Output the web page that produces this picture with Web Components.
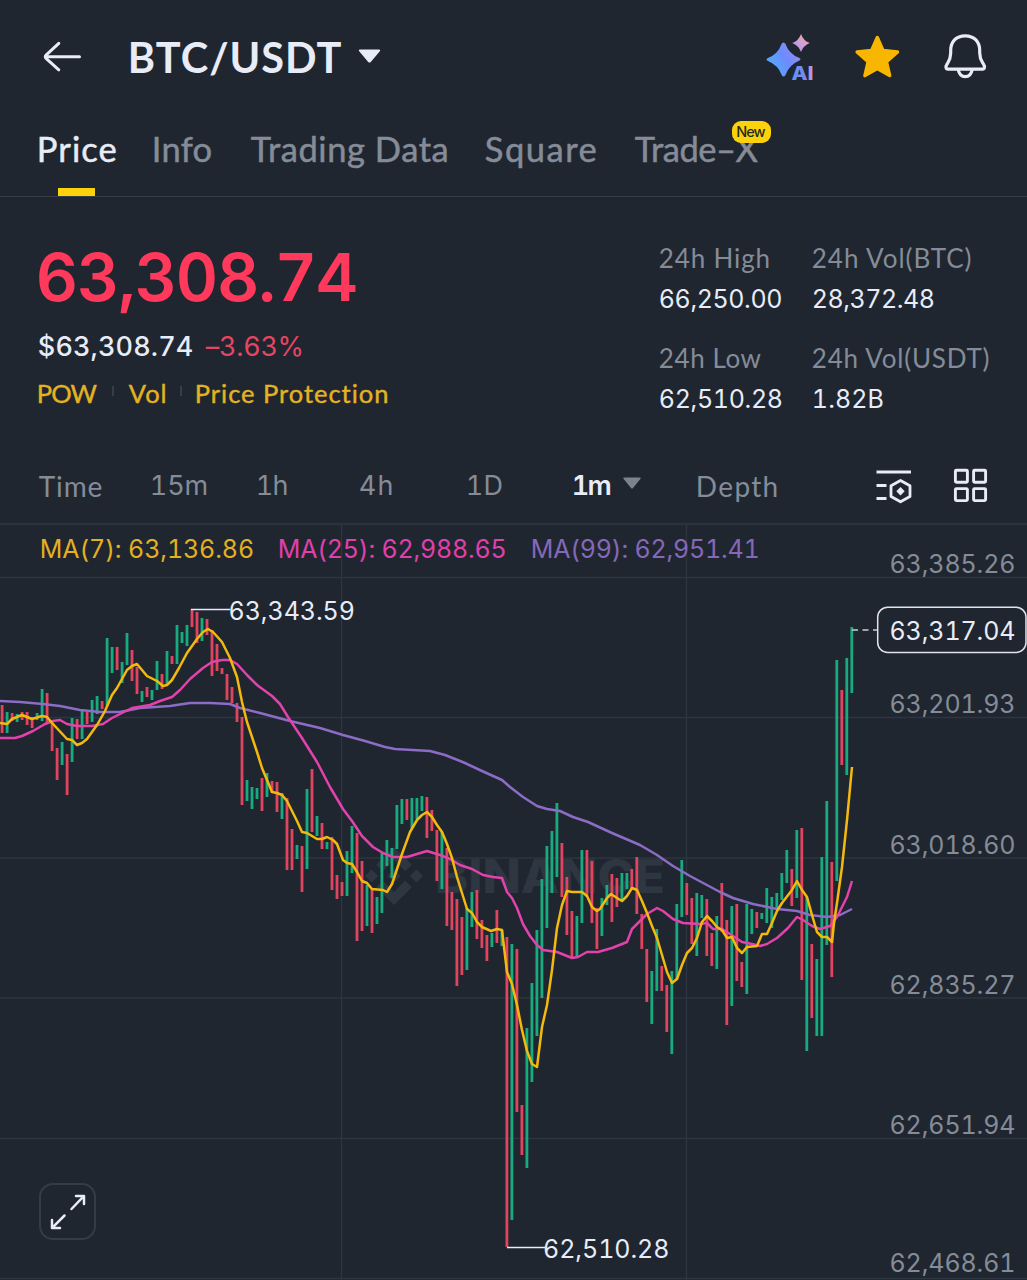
<!DOCTYPE html>
<html lang="en">
<head>
<meta charset="utf-8">
<title>BTC/USDT</title>
<style>
html { background: #1f2630; }
body {
  margin: 0;
  width: 1027px;
  height: 1280px;
  overflow: hidden;
  background: #1f2630;
  color: #e8ecf7;
  font-family: Lato, "Open Sans", sans-serif;
  --muted: #858c98;
  --num: Inter, Roboto, sans-serif;
}
</style>
</head>
<body>
<trade-app></trade-app>

<script>
// text that is spaced out to fill exactly "w" pixels of ink
window.customElements.define('fit-text',
  class extends HTMLElement {
    constructor(){
      super();
      this.attachShadow({mode:'open'});
      this.shadowRoot.innerHTML = `
<style>
:host { display: block; flex: none; white-space: nowrap; }
span { display: inline-block; font-variant-numeric: tabular-nums; }
:host([num]) span { font-kerning: none; }
</style>
<span><slot></slot></span>`;
    }

    connectedCallback(){
      const w = Number(this.getAttribute("w"));
      const span = this.shadowRoot.querySelector("span");
      const nodes = this.shadowRoot.querySelector("slot").assignedNodes({flatten:true});
      const text = nodes.map(n => n.textContent).join("").trim();
      const css = getComputedStyle(this);
      const ctx = document.createElement("canvas").getContext("2d");
      ctx.font = `${css.fontWeight} ${css.fontSize} ${css.fontFamily}`;
      const m = ctx.measureText(text);
      // side bearings of the first and last glyph
      const left = -m.actualBoundingBoxLeft;
      const right = m.width - m.actualBoundingBoxRight;
      const ink = span.getBoundingClientRect().width - left - right;
      this.style.width = w + "px";
      span.style.letterSpacing = (w - 1.2 - ink) / (text.length - 1) + "px";
      span.style.marginLeft = 0.8 - left + "px";
    }
  })

window.customElements.define('app-header',
  class extends HTMLElement {
    constructor(){
      super();
      this.attachShadow({mode:'open'});
      this.shadowRoot.innerHTML = `
<style>
:host {
  display: flex;
  flex: none;
  align-items: center;
  height: 114px;
  box-sizing: border-box;
  padding: 0 37px 0 42px;
}
svg { display: block; flex: none; }
.title {
  font-size: 41.500px;
  font-weight: 700;
  line-height: 50px;
  margin: 0 16px 1px 47px;
}
.actions { display: flex; align-items: center; margin-left: auto; gap: 36px; }
.bell { margin-left: 2px; }
</style>
<svg width="41" height="34" viewBox="42 40 41 34" fill="none" stroke="currentColor" stroke-width="3" stroke-linecap="round" stroke-linejoin="round">
  <path d="M79.5 56.7H45.5M58.8 43.3L46.3 54.8Q44.4 56.7 46.3 58.6L58.8 69.8"/>
</svg>
<fit-text class="title" w="212"><slot></slot></fit-text>
<svg width="23" height="16" viewBox="0 0 23 16"><path d="M2 .5H21Q23 .5 21.600 2.500L13 12.700Q11.500 14.500 10 12.700L1.400 2.500Q0 .5 2 .5Z" fill="currentColor"/></svg>
<div class="actions">
  <svg width="50" height="50" viewBox="766 32 50 50">
    <defs>
      <linearGradient id="a" x1="0" y1=".8" x2="1" y2=".2"><stop offset="0" stop-color="#4cb2f5"/><stop offset=".55" stop-color="#6c8cff"/><stop offset="1" stop-color="#9a8cf0"/></linearGradient>
      <linearGradient id="b" x1="0" y1="1" x2="1" y2="0"><stop offset="0" stop-color="#a596ff"/><stop offset=".5" stop-color="#cf9fd5"/><stop offset="1" stop-color="#ffa38c"/></linearGradient>
      <linearGradient id="c"><stop offset="0" stop-color="#5b9af5"/><stop offset=".6" stop-color="#7d86f0"/><stop offset="1" stop-color="#cf9be0"/></linearGradient>
    </defs>
    <path d="M783.500 42.500Q785 42.500 785.500 44Q789 54 799 57.800Q802 59.300 799 60.800Q789 65 785.500 75Q783.500 78 781.700 75Q778 65 768 61Q765 59.500 768 58Q778 54 781.500 44Q782 42.500 783.500 42.500Z" fill="url(#a)"/>
    <path d="M801 34Q803.500 41 809.800 43Q803.500 45.500 801 52Q798.500 45.500 792.200 43Q798.500 41 801 34Z" fill="url(#b)"/>
    <text x="791.500" y="79.500" textLength="22" lengthAdjust="spacingAndGlyphs" font-family="Inter" font-weight="800" font-size="18.500" fill="url(#c)">AI</text>
  </svg>
  <svg width="50" height="50" viewBox="852 32 50 50">
    <path d="M877.300 37.500L883 50.500L897.500 52L886.500 61.800L889.700 75.600L877.300 68.500L864.900 75.600L868.100 61.800L857.100 52L871.600 50.500Z" fill="#f9b600" stroke="#f9b600" stroke-width="3.400" stroke-linejoin="round"/>
  </svg>
  <svg class="bell" width="50" height="50" viewBox="940 32 50 50" fill="none" stroke="currentColor" stroke-width="3.200" stroke-linejoin="round">
    <path d="M965.200 35.800C956 35.800 950.700 42 950.700 50.500V53C950.700 59 949 61 947 64.200C945.500 66.500 945.600 69.200 948 69.200H982.500C984.800 69.200 985 66.500 983.500 64.200C981.500 61 979.700 59 979.700 53V50.500C979.700 42 974.400 35.800 965.200 35.800Z"/>
    <path d="M958.200 69.500Q959.500 76.600 965.200 76.600Q971 76.600 972.200 69.500"/>
  </svg>
</div>`;
    }
  })

window.customElements.define('tab-item',
  class extends HTMLElement {
    constructor(){
      super();
      this.attachShadow({mode:'open'});
      const badge = this.getAttribute("badge");
      this.shadowRoot.innerHTML = `
<style>
:host {
  display: block;
  position: relative;
  height: 82px;
  font-size: 34.500px;
  line-height: 69px;
  color: var(--muted);
}
.name { -webkit-text-stroke: .5px; }
:host([active]) { color: #e8ecf7; }
:host([active])::after {
  content: "";
  position: absolute;
  left: calc(50% - 19.5px);
  bottom: 0;
  width: 37px;
  height: 8px;
  background: #fcd20d;
}
.badge {
  position: absolute;
  left: 97.500px;
  top: 7px;
  width: 39px;
  height: 22px;
  box-sizing: border-box;
  padding-left: 5px;
  border-radius: 9px;
  background: #fcd20d;
  color: #252a20;
  font: 500 14.500px/22px var(--num);
}
</style>
<fit-text class="name" w="${this.getAttribute("w")}"><slot></slot></fit-text>
${badge ? `<div class="badge"><fit-text w="29.500">${badge}</fit-text></div>` : ""}`;
    }
  })

window.customElements.define('tab-bar',
  class extends HTMLElement {
    constructor(){
      super();
      this.attachShadow({mode:'open'});
      this.shadowRoot.innerHTML = `
<style>
:host {
  display: flex;
  flex: none;
  gap: 38px;
  padding-left: 39px;
  border-bottom: 1px solid #343c47;
}
</style>
<slot></slot>`;
    }
  })

window.customElements.define('price-summary',
  class extends HTMLElement {
    constructor(){
      super();
      this.attachShadow({mode:'open'});
      this.shadowRoot.innerHTML = `
<style>
:host { display: block; flex: none; box-sizing: border-box; padding: 51px 0 0 38px; width: 600px; }
.last { font: 600 65.500px/60px var(--num); color: #ff395b; }
.row { display: flex; align-items: center; }
.fiat { margin-top: 19px; font: 500 27px/40px var(--num); gap: 12px; }
.pct { font-weight: 400; color: #e64560; }
.tags { margin-top: 6px; font-size: 25.500px; line-height: 40px; color: #e3b322; -webkit-text-stroke: .4px; }
i { width: 2px; height: 10px; margin: -4px 14px 0; background: #363e48; }
</style>
<fit-text num class="last" w="318">63,308.74</fit-text>
<div class="row fiat">
  <fit-text num w="155">$63,308.74</fit-text>
  <fit-text num class="pct" w="97">–3.63%</fit-text>
</div>
<div class="row tags">
  <fit-text w="60">POW</fit-text><i></i>
  <fit-text w="38">Vol</fit-text><i></i>
  <fit-text w="192">Price Protection</fit-text>
</div>`;
    }
  })

window.customElements.define('stat-item',
  class extends HTMLElement {
    constructor(){
      super();
      this.attachShadow({mode:'open'});
      const [lw, vw] = this.getAttribute("w").split(",");
      this.shadowRoot.innerHTML = `
<style>
:host { display: block; line-height: 40px; }
.label { font-size: 26px; color: var(--muted); }
.value { font-family: var(--num); font-size: 25px; line-height: 42px; }
</style>
<fit-text class="label" w="${lw}">${this.getAttribute("label")}</fit-text>
<fit-text num class="value" w="${vw}">${this.getAttribute("value")}</fit-text>`;
    }
  })

window.customElements.define('interval-bar',
  class extends HTMLElement {
    constructor(){
      super();
      this.attachShadow({mode:'open'});
      this.shadowRoot.innerHTML = `
<style>
:host {
  display: flex;
  flex: none;
  box-sizing: border-box;
  align-items: center;
  height: 75px;
  padding: 2px 39px 0 38px;
  font-size: 28px;
  line-height: 40px;
  color: var(--muted);
}
svg { flex: none; display: block; }
.n { font-family: var(--num); font-size: 27px; }
.on { color: #e8ecf7; font-weight: 600; }
.icons { display: flex; gap: 41.500px; margin-left: auto; color: #e8ecf7; }
</style>
<fit-text w="64">Time</fit-text>
<fit-text class="n" w="57" style="margin-left:48px">15m</fit-text>
<fit-text class="n" w="31" style="margin-left:49px">1h</fit-text>
<fit-text class="n" w="33" style="margin-left:72px">4h</fit-text>
<fit-text class="n" w="36" style="margin-left:74px">1D</fit-text>
<fit-text class="n on" w="39" style="margin-left:70px">1m</fit-text>
<svg width="18" height="13" viewBox="0 0 18 13" style="margin:-4px 56px 0 12px"><path d="M1 .5H17Q18.300 .5 17.300 2L10 11Q9 12 8 11L.7 2Q-.3 .5 1 .5Z" fill="#7c838f"/></svg>
<fit-text w="80">Depth</fit-text>
<div class="icons">
  <svg width="36" height="36" viewBox="876 468 36 36" fill="none" stroke="currentColor" stroke-width="2.800">
    <path d="M876.500 472H911M876.500 485.500H886.500M876.500 498.500H886.500"/>
    <path d="M900.500 480.500L910 485.700V496.500L900.500 501.800L891 496.500V485.700Z" stroke-linejoin="round"/>
    <path d="M900.500 487L904.700 491.200L900.500 495.400L896.300 491.200Z" fill="currentColor" stroke="none"/>
  </svg>
  <svg width="35" height="36" viewBox="953 468 35 36" fill="none" stroke="currentColor" stroke-width="2.900">
    <rect x="955.400" y="470.300" width="12" height="12" rx="1"/><rect x="973.600" y="470.300" width="12" height="12" rx="1"/>
    <rect x="955.400" y="488.600" width="12" height="12" rx="1"/><rect x="973.600" y="488.600" width="12" height="12" rx="1"/>
  </svg>
</div>`;
    }
  })

// one entry per candle: colour, top, bottom
const CANDLES = `r705-733 g712-733 r713-721 g714-722 r712-720 r712-725 r717-728 g713-720 g689-721 r693-723
r721-751 r748-780 g742-765 r754-795 g718-762 r719-739 g711-739 r712-724 g700-722 g696-714
r701-709 g638-706 g647-673 r647-670 g662-683 g633-665 r650-681 r667-694 g691-702 r687-697
g690-700 g661-690 r674-689 g651-684 r656-664 g625-664 g632-643 g625-646 r609-627 r612-643
g618-641 r619-635 r630-676 r644-671 r668-674 r674-700 r687-703 r703-722 r717-805 g780-801
g787-809 g788-799 r778-811 g773-797 r781-793 r782-812 g793-819 r798-870 r829-870 g845-859
r846-892 g789-869 r769-832 g816-836 r823-849 g842-849 r837-890 r875-899 r882-896 g851-896
g826-873 r833-941 r861-931 g885-926 r888-933 g897-924 g853-913 g840-866 g848-878 g805-849
g799-824 r799-820 g798-828 g798-819 g796-811 r797-838 r810-831 r830-881 g832-889 r848-926
r892-930 r899-986 r917-975 g908-970 g892-927 r890-939 r920-948 r935-961 g933-947 r910-943
g930-946 r937-1247 g944-1220 r949-1112 r1105-1155 g1028-1168 g983-1082 g930-1036 g879-998 g846-928
g831-893 g803-877 r843-897 r877-935 r911-957 g916-957 g850-923 r850-897 r861-923 r908-949
g898-936 g885-905 r874-922 r878-907 g873-899 g873-889 r869-890 r857-914 r914-949 r949-1002
g971-1024 g929-991 r966-991 r985-1032 g971-1054 g904-980 g860-917 r883-915 r898-944 g893-956
g895-918 r899-956 r933-966 g916-969 r883-932 r920-1025 g906-1006 r904-981 r962-987 g904-994
g909-934 r912-928 g913-919 g888-923 g897-928 g893-908 g873-900 g850-883 r869-906 g830-898
r828-980 g897-1051 r944-1018 g959-1036 g857-1036 g801-945 r862-977 g660-881 r690-765 g658-775
g627-693`;

const MA7 = `0,723 7,724 12,719 22,715 32,719 42,716 47,717 53,724 67,739 72,740 77,745 82,743 87,739 97,725 105,711 112,695 117,688 127,670 132,666 137,664 147,676 157,681 163,686 167,685 172,680 179,668 187,653 197,639 203,632 208,629 213,632 222,642 230,658 237,677 242,702 247,722 257,752 262,768 272,792 277,793 282,795 287,801 292,811 297,821 302,832 307,833 317,839 322,839 327,837 333,840 337,844 343,860 347,863 352,864 357,872 362,881 367,883 372,889 383,890 387,892 392,884 402,854 410,832 417,820 422,815 427,812 432,817 437,825 442,832 447,844 452,858 457,877 467,909 472,913 477,922 482,927 491,931 497,929 502,930 504,947 507,972 512,984 517,1005 522,1030 527,1051 532,1064 537,1067 542,1027 547,1005 552,970 557,928 562,905 567,891 572,892 582,892 587,896 592,907 597,911 600,909 607,898 611,894 617,898 622,901 627,896 632,888 637,890 642,901 647,913 652,926 657,938 667,972 672,983 677,979 682,965 687,953 692,948 697,938 702,922 707,916 712,921 717,927 722,930 727,938 732,937 737,948 742,953 747,947 757,946 762,934 767,934 772,923 777,911 782,903 792,890 797,881 802,890 807,897 812,915 817,932 822,937 827,937 832,942 834,923 837,903 842,867 847,820 852,767`;
const MA25 = `0,738 15,738 22,736 33,731 45,724 53,721 60,720 67,724 77,726 92,726 103,724 112,718 122,713 132,708 150,705 160,701 172,697 180,690 190,679 203,668 212,662 222,660 230,660 237,664 247,675 257,685 272,696 280,704 288,717 302,738 317,762 330,787 343,809 352,821 362,836 373,847 383,853 393,857 407,857 417,854 427,851 440,855 450,859 460,865 472,869 483,875 493,877 502,878 507,892 512,898 517,908 523,924 530,936 537,945 543,950 557,952 572,958 578,957 587,952 598,952 612,948 627,942 632,929 637,924 647,914 657,908 663,911 673,919 683,923 700,924 707,923 713,929 722,929 730,934 742,942 752,944 760,946 767,944 777,938 788,928 797,917 803,920 812,926 820,929 830,926 837,917 847,897 852,881`;
const MA99 = `0,701 20,702 43,704 60,706 80,710 100,712 120,712 140,708 170,706 190,703 210,703 230,704 240,708 260,713 290,721 320,728 343,735 365,741 385,747 395,749 430,751 445,755 465,763 482,771 502,780 510,787 523,797 537,806 547,809 560,811 573,817 588,822 612,833 640,845 657,855 673,866 690,876 720,892 733,898 753,904 777,909 797,911 810,915 827,917 840,915 852,909`;

window.customElements.define('candle-chart',
  class extends HTMLElement {
    constructor(){
      super();
      this.attachShadow({mode:'open'});
      const candles = CANDLES.split(/\s+/).map((c, i) => {
        const [top, bottom] = c.slice(1).split("-");
        return `<path class="${c[0]}" d="M${(2.1 + i * 4.998).toFixed(1)} ${top}V${bottom}"/>`;
      }).join("");
      const grid = [577.5, 717.5, 858, 998, 1138.5, 1278.5].map(y => `M0 ${y}H1027`).join("");
      const axis = [["63,385.26", 573], ["63,201.93", 713], ["63,018.60", 854], ["62,835.27", 994], ["62,651.94", 1134], ["62,468.61", 1272]]
        .map(([t, y]) => `<text class="axis" x="889.5" y="${y}" textLength="126">${t}</text>`).join("");
      this.shadowRoot.innerHTML = `
<style>
:host { display: block; flex: none; position: relative; height: 758px; }
.plot { display: block; }
.legend {
  position: absolute;
  left: 41px;
  top: 7px;
  display: flex;
  gap: 26px;
  font: 400 25px/40px var(--num);
}
button {
  position: absolute;
  left: 39px;
  top: 661px;
  width: 57px;
  height: 57px;
  padding: 0;
  border: 2px solid #343c46;
  border-radius: 14px;
  background: none;
  color: #e8ecf7;
}
button svg { display: block; margin: auto; }
.g, .r { stroke-width: 2.800; }
.g { stroke: #18ab7f; }
.r { stroke: #e0445f; }
.ma { fill: none; stroke-width: 2.500; stroke-linejoin: round; }
text {
  font-family: var(--num);
  font-size: 25px;
  font-variant-numeric: tabular-nums;
  font-kerning: none;
  fill: #e8ecf7;
}
.axis { fill: var(--muted); }
.mark { font-size: 46px; font-weight: 800; fill: #2e3641; }
</style>
<svg class="plot" width="1027" height="758" viewBox="0 522 1027 758">
  <path d="M0 524H1027" stroke="#2b333e" stroke-width="2.500"/>
  <path d="${grid}M341.500 524V1280M686.500 524V1280" stroke="#2d3540" stroke-width="1.400" fill="none"/>
  <g fill="#2e3641">
    <path transform="translate(365 847) scale(.458)" d="M38.730 53.200l24.590-24.580 24.600 24.600 14.300-14.310L63.320 0 24.430 38.900zM0 63.310l14.300-14.310 14.310 14.310-14.310 14.300zM38.730 73.410l24.590 24.590 24.600-24.600 14.310 14.290-38.900 38.910-38.910-38.880zM98 63.310l14.300-14.310 14.310 14.300-14.310 14.320zM77.830 63.300L63.320 48.780 48.790 63.300l14.530 14.530z"/>
    <text class="mark" x="435" y="892.500" textLength="230" lengthAdjust="spacingAndGlyphs">BINANCE</text>
  </g>
  ${candles}
  <polyline class="ma" stroke="#8c6cc4" points="${MA99}"/>
  <polyline class="ma" stroke="#e342ac" points="${MA25}"/>
  <polyline class="ma" stroke="#f3b90e" points="${MA7}"/>
  ${axis}
  <path d="M191 609.500H230M507 1247.500H545" stroke="#e8ecf7" stroke-width="1.500"/>
  <text x="228.500" y="619.500" textLength="126.500">63,343.59</text>
  <text x="543" y="1257.500" textLength="126.500">62,510.28</text>
  <path d="M852 630H877" stroke="#c9ced9" stroke-width="1.400" stroke-dasharray="6 4.500"/>
  <rect x="877.700" y="607.200" width="148.300" height="45.300" rx="10" fill="#1f2630" stroke="#dfe3ee" stroke-width="1.500"/>
  <text x="889.500" y="640" textLength="126">63,317.04</text>
</svg>
<div class="legend">
  <fit-text num w="212" style="color:#e3b020">MA(7): 63,136.86</fit-text>
  <fit-text num w="227" style="color:#e040ab">MA(25): 62,988.65</fit-text>
  <fit-text num w="226" style="color:#8668b8">MA(99): 62,951.41</fit-text>
</div>
<button aria-label="Full screen">
  <svg width="36" height="36" viewBox="49.500 1193.500 36 36" fill="none" stroke="currentColor" stroke-width="2.500" stroke-linecap="round" stroke-linejoin="round">
    <path d="M71 1208.500L83.300 1195.700M75.500 1195.500H83.500V1203.500M64 1215L51.700 1227.300M51.500 1219.500V1227.500H59.500"/>
  </svg>
</button>`;
    }
  })

window.customElements.define('trade-app',
  class extends HTMLElement {
    constructor(){
      super();
      this.attachShadow({mode:'open'});
      this.shadowRoot.innerHTML = `
<style>
:host { display: flex; flex-direction: column; width: 1027px; height: 1280px; }
.summary { display: flex; flex: none; height: 250px; }
.stats {
  display: grid;
  grid-template-columns: 153px 177px;
  grid-auto-rows: 80px;
  row-gap: 20px;
  align-content: start;
  margin-left: 59px;
  padding-top: 41px;
}
</style>
<app-header>BTC/USDT</app-header>
<tab-bar>
  <tab-item active w="77">Price</tab-item>
  <tab-item w="58">Info</tab-item>
  <tab-item w="197">Trading Data</tab-item>
  <tab-item w="111">Square</tab-item>
  <tab-item w="125" badge="New">Trade–X</tab-item>
</tab-bar>
<section class="summary">
  <price-summary></price-summary>
  <div class="stats">
    <stat-item label="24h High" value="66,250.00" w="110,123"></stat-item>
    <stat-item label="24h Vol(BTC)" value="28,372.48" w="159,122"></stat-item>
    <stat-item label="24h Low" value="62,510.28" w="102,123"></stat-item>
    <stat-item label="24h Vol(USDT)" value="1.82B" w="177,71"></stat-item>
  </div>
</section>
<interval-bar></interval-bar>
<candle-chart></candle-chart>`;
    }
  })
</script>
</body>
</html>
